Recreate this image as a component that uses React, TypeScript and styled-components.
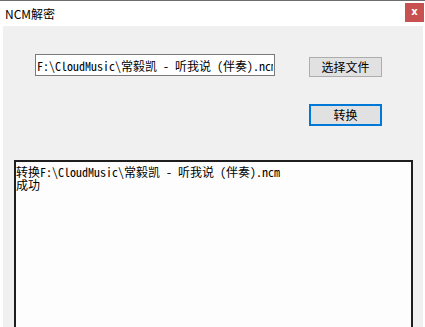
import React from 'react';
import styled, { createGlobalStyle } from 'styled-components';

const GlobalStyle = createGlobalStyle`
  html, body {
    margin: 0;
    padding: 0;
    background: #ffffff;
    overflow: hidden;
  }
`;

const monoStack = `"Noto Sans Mono CJK SC", "NSimSun", "Liberation Mono", "Noto Sans CJK SC", monospace`;
const uiStack = `"Noto Sans CJK SC", "Microsoft YaHei", sans-serif`;

const Window = styled.div`
  width: 425px;
  height: 327px;
  box-sizing: border-box;
  border-top: 1px solid #6d6d6d;
  background: #ffffff;
  display: flex;
  flex-direction: column;
  overflow: hidden;
`;

const TitleBar = styled.div`
  height: 25px;
  flex-shrink: 0;
  display: flex;
  align-items: flex-start;
  padding-left: 5px;
  font-family: ${uiStack};
  font-size: 12px;
  color: #000;
`;

const Title = styled.span`
  margin-top: 4px;
  line-height: 17px;
`;

const CloseButton = styled.div`
  margin-left: auto;
  margin-top: 2px;
  margin-right: 1px;
  width: 19px;
  height: 19px;
  background: #c75050;
  color: #fff;
  font-family: "DejaVu Sans", sans-serif;
  font-weight: bold;
  font-size: 10px;
  line-height: 18px;
  text-align: center;
`;

const Client = styled.div`
  flex: 1;
  min-height: 0;
  margin: 0 2px 0 3px;
  background: #f0f0f0;
  display: flex;
  flex-direction: column;
  padding: 28px 10px 0 11px;
`;

const TopRow = styled.div`
  display: flex;
  align-items: flex-start;
  padding-left: 21px;
  flex-shrink: 0;
`;

const PathInput = styled.input`
  box-sizing: border-box;
  width: 240px;
  height: 22px;
  margin: 0;
  padding: 0 1px;
  border: 1px solid #7a7a7a;
  background: #fff;
  font-family: ${monoStack};
  font-size: 12px;
  color: #000;
  outline: none;
`;

const Button = styled.button<{ $focused?: boolean }>`
  box-sizing: border-box;
  width: 73px;
  height: ${(p) => (p.$focused ? '22px' : '20px')};
  margin: 0;
  padding: 0;
  background: #e1e1e1;
  border: ${(p) => (p.$focused ? '2px solid #0078d7' : '1px solid #adadad')};
  font-family: ${uiStack};
  font-size: 12px;
  color: #000;
  line-height: 1;
`;

const SelectButton = styled(Button)`
  margin-left: 34px;
  margin-top: 3px;
`;

const ActionRow = styled.div`
  display: flex;
  flex-shrink: 0;
  padding-left: 295px;
  margin-top: 27px;
`;

const LogBox = styled.div`
  margin-top: 34px;
  flex: 1;
  box-sizing: border-box;
  width: 399px;
  border: 2px solid #1e1e1e;
  border-bottom: none;
  background: #fdfdfd;
  padding: 3px 0 0 0;
  font-family: ${monoStack};
  font-size: 12px;
  line-height: 13px;
  color: #000;
`;

const LogLine = styled.div`
  white-space: pre;
  height: 13px;
  overflow: visible;
`;

const path = 'F:\\CloudMusic\\常毅凯 - 听我说 (伴奏).ncm';

export default function App() {
  return (
    <>
      <GlobalStyle />
      <Window>
        <TitleBar>
          <Title>NCM解密</Title>
          <CloseButton>x</CloseButton>
        </TitleBar>
        <Client>
          <TopRow>
            <PathInput readOnly value={path} />
            <SelectButton>选择文件</SelectButton>
          </TopRow>
          <ActionRow>
            <Button $focused>转换</Button>
          </ActionRow>
          <LogBox>
            <LogLine>{'转换' + path}</LogLine>
            <LogLine>成功</LogLine>
          </LogBox>
        </Client>
      </Window>
    </>
  );
}
